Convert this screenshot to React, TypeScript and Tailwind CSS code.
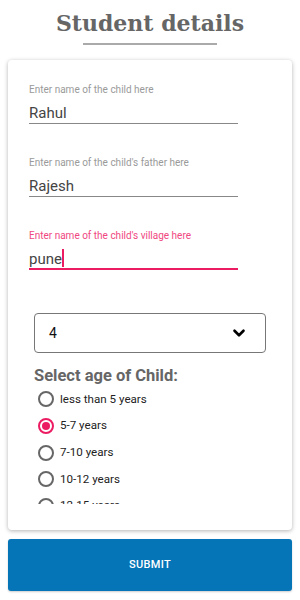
import { ChevronDown } from "lucide-react";

const ages = ["less than 5 years", "5-7 years", "7-10 years", "10-12 years", "12-15 years"];

function Field({ label, value, active }: { label: string; value: string; active?: boolean }) {
  return (
    <div className="w-[209px]">
      <div className={`text-[10px] leading-[12px] ${active ? "text-[#f0487f]" : "text-[#9a9a9a]"}`}>{label}</div>
      <div
        className={`mt-[7px] h-[21px] text-[15px] leading-[20px] text-[#444] ${
          active ? "border-b-2 border-[#ec1c63]" : "border-b border-[#888]"
        }`}
      >
        {value}
        {active && <span className="inline-block w-[2px] h-[18px] align-[-3px] bg-[#ec1c63]" />}
      </div>
    </div>
  );
}

export default function App() {
  return (
    <div className="w-[300px] h-[600px] bg-white overflow-hidden" style={{ fontFamily: "Roboto, sans-serif" }}>
      <div className="flex flex-col items-center pt-[6px]">
        <h1 className="text-[22px] leading-[34px] font-bold text-[#666]" style={{ fontFamily: '"DejaVu Serif", serif' }}>
          Student details
        </h1>
        <div className="mt-[3px] w-[134px] h-[2px] bg-[#aaa]" />
      </div>

      <div className="mx-[8px] mt-[15px] h-[470px] rounded-[4px] bg-white shadow-[0_1px_4px_rgba(0,0,0,0.3)] px-[21px] pt-[24px] flex flex-col">
        <div className="flex flex-col gap-[33px]">
          <Field label="Enter name of the child here" value="Rahul" />
          <Field label="Enter name of the child's father here" value="Rajesh" />
          <Field label="Enter name of the child's village here" value="pune" active />
        </div>

        <div className="mt-[43px] mx-[5px] h-[40px] rounded-[4px] border border-[#777] flex items-center justify-between pl-[14px] pr-[17px]">
          <span className="text-[14px] text-[#111]">4</span>
          <ChevronDown size={18} strokeWidth={3.5} className="text-black" />
        </div>

        <div className="mt-[13px] ml-[5px] text-[16.5px] leading-[20px] font-bold text-[#666]">Select age of Child:</div>

        <div className="ml-[9px] h-[118px] overflow-hidden flex flex-col">
          {ages.map((a, i) => (
            <div key={a} className="h-[26.7px] shrink-0 flex items-center gap-[6px]">
              <span
                className={`w-[16px] h-[16px] rounded-full border-2 flex items-center justify-center ${
                  i === 1 ? "border-[#ec1c63]" : "border-[#666]"
                }`}
              >
                {i === 1 && <span className="w-[8px] h-[8px] rounded-full bg-[#ec1c63]" />}
              </span>
              <span className="text-[11.6px] text-[#222]">{a}</span>
            </div>
          ))}
        </div>
      </div>

      <button className="mx-[8px] mt-[9px] w-[284px] h-[52px] rounded-[3px] bg-[#0575b8] text-white text-[11px] font-medium tracking-[0.3px] shadow-[0_1px_2px_rgba(0,0,0,0.2)]">
        SUBMIT
      </button>
    </div>
  );
}
